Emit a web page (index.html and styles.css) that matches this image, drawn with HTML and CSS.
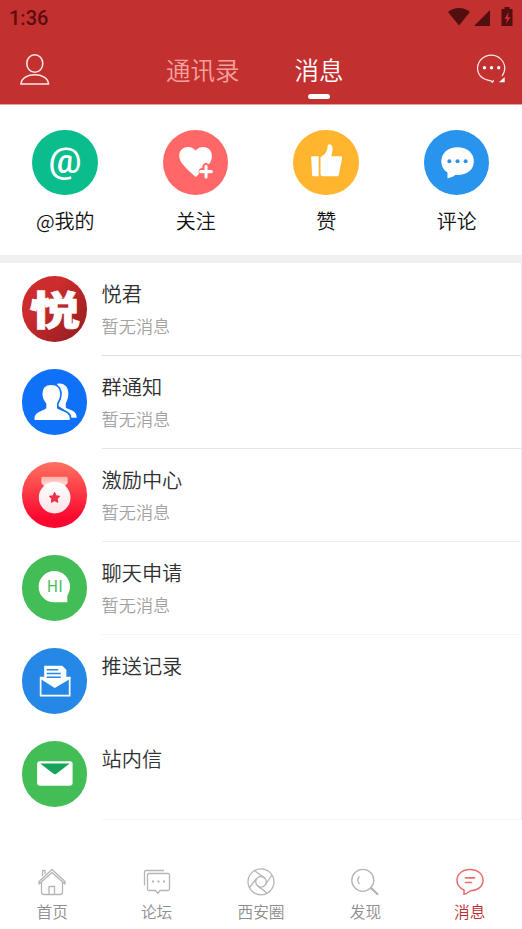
FILE: index.html
```html
<!DOCTYPE html>
<html lang="zh-CN">
<head>
<meta charset="utf-8">
<title>消息</title>
<link rel="stylesheet" href="styles.css">
</head>
<body>
<div class="app">
  <header class="header">
    <div class="status">
      <span class="clock">1:36</span>
      <svg class="status-icons" width="68" height="20" viewBox="0 0 68 20">
        <path d="M0 5C6.500-.5 16-.5 22 5L11 18.500Z"/>
        <path d="M42 3V19H26Z"/>
        <path fill-rule="evenodd" d="M56.500 0h5v2h3v17h-11V2H56.500ZM60.500 5 56.500 12h2.500l-1 5 4.500-7H60Z"/>
      </svg>
    </div>
    <div class="topbar">
      <svg class="top-icon" width="32" height="34" viewBox="0 0 32 34">
        <ellipse cx="15.800" cy="10.500" rx="8" ry="8.700"/>
        <path d="M2 31C2.500 18.800 29 18.800 29.500 31Z"/>
      </svg>
      <nav class="tabs">
        <span class="tab">通讯录</span>
        <span class="tab tab-active">消息</span>
      </nav>
      <svg class="top-icon chat" width="32" height="34" viewBox="0 0 32 34">
        <path d="M17.500 30.500 16 28.800C8 27.500 2.500 23 2.500 15.700A13.700 13.700 0 0 1 29.800 15.500C29.800 18.800 28.800 21.800 27 24M17.500 30.500 18.500 28"/>
        <g class="solid"><circle cx="9.500" cy="15.700" r="1.700"/><circle cx="16.500" cy="15.700" r="1.700"/><circle cx="23.700" cy="15.700" r="1.700"/><path d="M29.700 25V30.300H24Z"/></g>
      </svg>
    </div>
  </header>

  <section class="quick">
    <div class="quick-item">
      <svg class="disc at" viewBox="0 0 65 65"><text class="at-sign" transform="translate(32.800 42.500) scale(1.030 1)">@</text></svg>
      <span class="quick-label">@我的</span>
    </div>
    <div class="quick-item">
      <svg class="disc follow" viewBox="0 0 65 65">
        <path fill="#fff" d="M32.500 46.700C27 41 16 33.500 16 25.500C16 17 27 14 32.300 20.300C38 14 48.500 17 48.500 25.500C48.500 29 47.500 31.500 45.500 34L43 32.500C39.500 33 39 35 39 37.500C36 38 34.500 40 35.800 43.500Z"/>
        <path class="plus" d="M42.700 36V46.700M37.300 41.300H48"/>
      </svg>
      <span class="quick-label">关注</span>
    </div>
    <div class="quick-item">
      <svg class="disc like" viewBox="0 0 65 65">
        <path fill="#fff" d="M18 27Q18 26 19 26H25.500V46H20Q19 46 19 45ZM27.300 27C32 24.500 34.300 21 34.300 16C34.300 13.300 39 13 39.200 18C39.300 21 38.500 23.500 38 26H47.500Q49 26 48.800 27.500L45.500 44.500Q45.200 46 43.500 46H30Q27.300 46 27.300 43.500Z"/>
      </svg>
      <span class="quick-label">赞</span>
    </div>
    <div class="quick-item">
      <svg class="disc comment" viewBox="0 0 65 65">
        <path fill="#fff" d="M23.300 48V42.200C19.500 40 17.200 35.800 17.200 31C17.200 22.500 24 17 33.300 17S49.500 22.500 49.500 31S42.500 44.700 33.300 44.700H31C29 46.300 26.500 47.500 23.300 48Z"/>
        <g fill="#2894ee"><circle cx="25.200" cy="31" r="2"/><circle cx="33.300" cy="31" r="2"/><circle cx="41.300" cy="31" r="2"/></g>
      </svg>
      <span class="quick-label">评论</span>
    </div>
  </section>

  <main class="list">
    <article class="row">
      <svg class="avatar brand" viewBox="0 0 65 65"><text class="brand-text" transform="translate(32.700 48.800) scale(1.170 .93)">悦</text></svg>
      <div class="body line-1"><h2>悦君</h2><p>暂无消息</p></div>
    </article>
    <article class="row">
      <svg class="avatar group" viewBox="0 0 65 65">
        <path fill="#fff" d="M35 14.700C42 13.500 46 18 46 24.500C46 29 44.500 31.500 43.500 34V38.500C47 41 54.500 40.500 54.300 48.500H44V42L35 36Z"/>
        <path fill="#fff" stroke="#0f71f8" stroke-width="1.600" d="M28.800 15C35 15 38.700 19 38.700 25C38.700 29.500 37 32 35.500 34.500V38.500C39 41.500 48.300 41.500 48.300 49.500Q48.300 51.500 46 51.500H14Q11.500 51.500 11.500 49.500C11.500 41.500 20 41.500 23.300 38.500V34.500C21.500 32 19.500 29 19.500 25C19.500 19 23 15 28.800 15Z"/>
      </svg>
      <div class="body line-2"><h2>群通知</h2><p>暂无消息</p></div>
    </article>
    <article class="row">
      <svg class="avatar reward" viewBox="0 0 65 65">
        <defs><linearGradient id="ribbon" x2="0" y2="1"><stop stop-color="#ffaea6"/><stop offset="1" stop-color="#ffe9e6"/></linearGradient>
        <linearGradient id="medal" x2="0" y2="1"><stop stop-color="#fff"/><stop offset="1" stop-color="#ffe3e8"/></linearGradient></defs>
        <path fill="url(#ribbon)" d="M20.500 14.700H44Q45.300 14.700 45.300 16V21L41 25H23.500L19.200 21V16Q19.200 14.700 20.500 14.700Z"/>
        <circle cx="32.400" cy="35.300" r="15.700" fill="url(#medal)"/>
        <path class="star" d="M32.300 30.200 33.900 33.400 37.400 33.900 34.900 36.400 35.500 39.900 32.300 38.200 29.100 39.900 29.700 36.400 27.200 33.900 30.700 33.400Z"/>
      </svg>
      <div class="body line-3"><h2>激励中心</h2><p>暂无消息</p></div>
    </article>
    <article class="row">
      <svg class="avatar hello" viewBox="0 0 65 65">
        <path fill="#fff" d="M32 16A15.700 15.700 0 0 1 47.700 31.700Q47.700 36 45 40.500V47H32A15.500 15.500 0 0 1 32 16Z"/>
        <text class="hi" x="32.700" y="37">HI</text>
      </svg>
      <div class="body line-4"><h2>聊天申请</h2><p>暂无消息</p></div>
    </article>
    <article class="row">
      <svg class="avatar push" viewBox="0 0 65 65">
        <path fill="#fff" d="M22 30V17.700H40L44 21.500V30L32.500 39.300Z"/>
        <path stroke="#2688e6" stroke-width="1.500" d="M24.500 21.500H36M24.500 25.300H38.500M24.500 29H38.500"/>
        <path fill="none" stroke="#fff" stroke-width="1.700" d="M22 29.500H18.500V47.300H47.300V29.500H44"/>
        <path fill="#fff" d="M18 29H22L32.500 36 44 29H48V30.500L32.500 39.700 18 30.500Z"/>
      </svg>
      <div class="body"><h2>推送记录</h2></div>
    </article>
    <article class="row last">
      <svg class="avatar mail" viewBox="0 0 65 65">
        <rect x="15" y="20" width="35.200" height="24.300" rx="2.500" fill="#fff"/>
        <path fill="#14a45c" d="M18 22.300H47.300L34.500 32.300Q32.800 33.500 31 32.300Z"/>
      </svg>
      <div class="body line-4"><h2>站内信</h2></div>
    </article>
  </main>

  <footer class="nav">
    <div class="nav-item">
      <svg viewBox="0 0 28 28"><path d="M4.500 8V2.500H7V6M1 13.500 14 1.500 27 13.500V16L14 4.500 1 16ZM3.500 14V24Q3.500 26.500 6 26.500H22Q24.500 26.500 24.500 24V14M11 26.500V18.500H16.500V26.500"/></svg>
      <span>首页</span>
    </div>
    <div class="nav-item">
      <svg viewBox="0 0 28 28"><path d="M1.500 17.500V4Q1.500 2.500 3 2.500H21M6 5.500H25Q26.500 5.500 26.500 7V21Q26.500 22.500 25 22.500H17L14.800 25.500 12.500 22.500H6Q4.500 22.500 4.500 21V7Q4.500 5.500 6 5.500Z"/><path class="dots" d="M9 13.500h2M14.500 13.500h2M20 13.500h2"/></svg>
      <span>论坛</span>
    </div>
    <div class="nav-item">
      <svg viewBox="0 0 28 28"><circle cx="14" cy="13.800" r="13"/><circle cx="14" cy="13.800" r="5.300"/><path d="M8 3 18 10.500M25 7 18.500 16.500M20 25 10 17.500M2.500 19.500 9.500 10.500"/></svg>
      <span>西安圈</span>
    </div>
    <div class="nav-item">
      <svg viewBox="0 0 28 28"><circle cx="11.800" cy="12.300" r="11"/><path d="M8.500 8.500Q5 12 8.500 16"/><path class="handle" d="M20 20 26.300 26"/></svg>
      <span>发现</span>
    </div>
    <div class="nav-item current">
      <svg viewBox="0 0 28 28"><path d="M8 26.300V22C3.500 20 1 16.500 1 12.300C1 6 6.500 1.500 14 1.500S27 6 27 12.300S21.500 22.800 14.500 22.800C12.500 24.500 10.500 26 8 26.300Z"/><path class="lines" d="M9.500 9.800H18.500M9.500 14.500H15.500"/></svg>
      <span>消息</span>
    </div>
  </footer>
</div>
</body>
</html>
```
FILE: styles.css
```css
* { box-sizing: border-box; }

body {
  margin: 0;
  background: #fff;
  font-family: "Noto Sans CJK SC", sans-serif;
  font-weight: 350;
}

.app {
  display: flex;
  flex-direction: column;
  width: 522px;
  height: 929px;
  overflow: hidden;
}

svg { display: block; }

.header {
  height: 104px;
  background: #c33030;
  box-shadow: 0 1px #e3a3a3;
}

.status {
  display: flex;
  justify-content: space-between;
  height: 36px;
  padding: 7px 6px 0 9px;
  color: #5c0d0d;
}

.clock {
  font: 500 20px/23px Roboto, sans-serif;
}

.status-icons { fill: #530f10; }

.topbar {
  display: grid;
  grid-template-columns: 147px 1fr 32px;
  height: 68px;
  padding: 17px 15px 0 19px;
}

.top-icon {
  fill: none;
  stroke: #ffe9e6;
  stroke-width: 1.500;
}

.chat { margin-top: -1px; stroke-width: 1.200; }
.solid { fill: #fff; stroke: none; }

.tabs { display: flex; gap: 55px; margin-top: -1px; }

.tab {
  display: flex;
  flex-direction: column;
  align-items: center;
  font-size: 24.500px;
  line-height: 35px;
  color: #f3a19d;
}

.tab-active { color: #fff; }

.tab-active::after {
  content: "";
  width: 22px;
  height: 5px;
  margin-top: 7px;
  border-radius: 3px;
  background: #fff;
}

.quick {
  display: grid;
  grid-template-columns: repeat(4, 1fr);
  height: 159px;
  padding-top: 25.500px;
  border-bottom: 8px solid #f0f0f0;
}

.quick-item { display: flex; flex-direction: column; align-items: center; }

.disc, .avatar {
  flex: none;
  width: 65.500px;
  height: 65.500px;
  border-radius: 50%;
}

.disc { margin-left: -1px; }

.at { background: #0abd8c; }

.at-sign {
  fill: #fff;
  font: 500 35.500px Roboto, sans-serif;
  text-anchor: middle;
}

.follow { background: #ff6769; }
.like { background: #ffb52d; }
.comment { background: #2894ee; }

.plus { stroke: #fff; stroke-width: 3; stroke-linecap: round; }

.quick-label {
  margin-top: 11px;
  font-size: 20px;
  line-height: 30px;
  color: #111;
}

.list { height: 557px; border-right: 1px solid #e8e8e8; }

.row {
  display: flex;
  gap: 14.500px;
  height: 93px;
  padding: 13px 0 0 21.500px;
}

.last { height: 92px; }

.body {
  flex: 1;
  margin-top: -13px;
  padding-top: 16px;
  border-bottom: 1px solid transparent;
}

.line-1 { border-color: #dedede; }
.line-2 { border-color: #e6e6e6; }
.line-3 { border-color: #eee; }
.line-4 { border-color: #f5f5f5; }

h2, p { margin: 0; font-weight: inherit; }
h2 { font-size: 20.200px; line-height: 30px; color: #303030; }
p { margin-top: 4px; font-size: 17.200px; line-height: 25px; color: #a2a2a2; }

.brand { background: linear-gradient(135deg, #cc2c2c 35%, #8f1b20); }

.brand-text {
  fill: #fff;
  stroke: #fff;
  stroke-width: .5;
  font-size: 43px;
  font-weight: 900;
  text-anchor: middle;
}

.group { background: #0f71f8; }
.reward { background: linear-gradient(#ff7260, #fa082f 85%); }
.hello { background: #43be57; }
.push { background: #2688e6; }
.mail { background: #43be57; }

.star { fill: #eb3349; stroke: #eb3349; stroke-linejoin: round; }

.hi {
  fill: #43be57;
  font: 400 15.500px "Noto Sans CJK SC", sans-serif;
  letter-spacing: .3px;
  text-anchor: middle;
}

.nav {
  display: grid;
  grid-template-columns: repeat(5, 1fr);
  flex: 1;
  padding-top: 48px;
}

.nav-item {
  display: flex;
  flex-direction: column;
  align-items: center;
  font-size: 15.700px;
  line-height: 24px;
  color: #8e8e8e;
}

.nav-item svg {
  width: 28px;
  height: 28px;
  margin-bottom: 4px;
  fill: none;
  stroke: #b5b5b5;
  stroke-width: 1.300;
  stroke-linejoin: round;
}

.nav-item .dots { stroke-width: 1.800; }
.nav-item .handle { stroke-width: 2.400; stroke-linecap: round; }
.nav-item .lines { stroke-width: 1.700; stroke-linecap: round; }
.current { color: #bd2d32; }
.nav-item.current svg { stroke: #ee6a6c; stroke-width: 1.500; }
```
